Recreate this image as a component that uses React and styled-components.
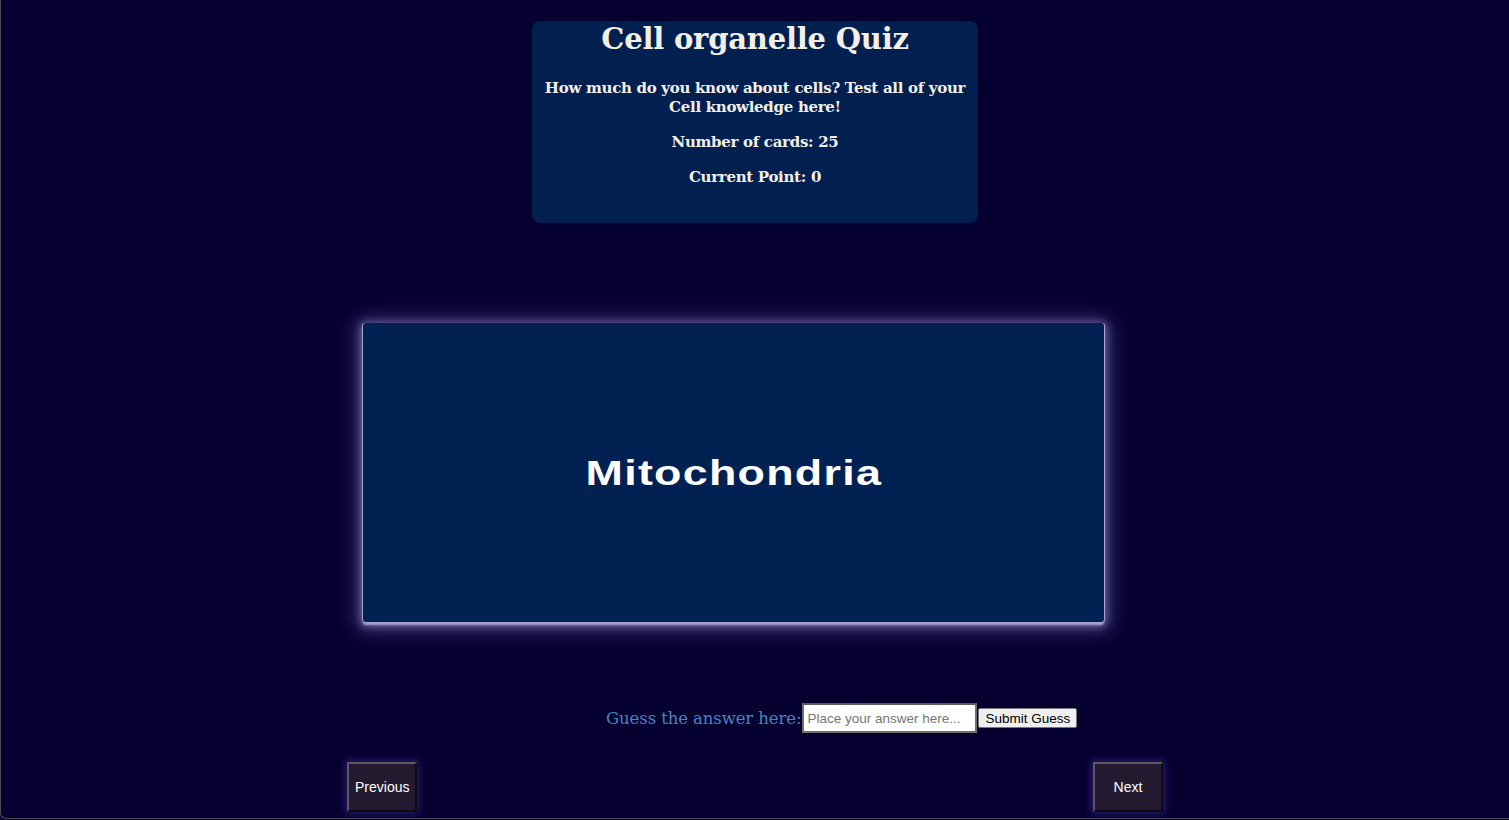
import React, { useState } from 'react'
import styled, { createGlobalStyle } from 'styled-components'

const GlobalStyle = createGlobalStyle`
  html, body {
    margin: 0;
    padding: 0;
    background: #060031;
  }
`;

const Page = styled.div`
  box-sizing: border-box;
  height: 819px;
  border-left: 1px solid #4b4a58;
  border-bottom: 1px solid #4b4a58;
  border-bottom-left-radius: 6px;
  background: #060031;
  display: flex;
  flex-direction: column;
  align-items: center;
  padding-top: 21px;
  overflow: hidden;
`;

const Header = styled.div`
  box-sizing: border-box;
  width: 446px;
  padding: 0 8px 36px;
  background: #012050;
  border-radius: 8px;
  color: #f4efe6;
  text-align: center;
  font-family: "DejaVu Serif", Georgia, serif;
`;

const Title = styled.h1`
  margin: 0;
  font-size: 29px;
  line-height: 36px;
  font-weight: bold;
  letter-spacing: -0.2px;
`;

const Info = styled.h4`
  margin: ${(p) => p.gap}px 0 0;
  font-size: 15px;
  line-height: 19px;
  font-weight: bold;
  letter-spacing: -0.3px;
`;

const Main = styled.div`
  width: 816px;
  display: flex;
  flex-direction: column;
`;

const Card = styled.div`
  margin: 100px 0 0 16px;
  width: 741px;
  height: 299px;
  background: #012153;
  border-radius: 3px;
  display: flex;
  align-items: center;
  justify-content: center;
  box-shadow:
    -1px 0 0 0 #aaa6cc,
    1px 0 0 0 #aaa6cc,
    0 3px 2px 0 #a6a2c9,
    0 2px 8px 3px rgba(150, 144, 200, 0.6),
    0 2px 20px 8px rgba(110, 100, 180, 0.4);
  cursor: pointer;
`;

const Term = styled.span`
  display: inline-block;
  color: #ffffff;
  font-family: "Liberation Sans", Arial, sans-serif;
  font-weight: bold;
  font-size: 35px;
  letter-spacing: 1px;
  transform: scaleX(1.28);
`;

const GuessRow = styled.div`
  margin-top: 81px;
  padding-left: 259px;
  display: flex;
  align-items: center;
  height: 30px;
`;

const GuessLabel = styled.span`
  color: #4287c2;
  font-family: "DejaVu Serif", Georgia, serif;
  font-size: 16.5px;
  letter-spacing: -0.1px;
  margin-right: 1px;
`;

const GuessInput = styled.input`
  box-sizing: border-box;
  width: 175px;
  height: 30px;
  border: 2px solid #6e6e6e;
  border-top-color: #5a5a5a;
  padding: 0 3px;
  font-family: "Liberation Sans", Arial, sans-serif;
  font-size: 13.5px;
  outline: none;
  &::placeholder {
    color: #767676;
  }
`;

const SubmitButton = styled.button`
  box-sizing: border-box;
  height: 20px;
  margin-left: 1px;
  padding: 0 6px;
  background: #efefef;
  border: 1px solid #767676;
  border-radius: 2px;
  font-family: "Liberation Sans", Arial, sans-serif;
  font-size: 13.5px;
  color: #000;
  cursor: pointer;
`;

const NavRow = styled.div`
  margin-top: 29px;
  display: flex;
  justify-content: space-between;
`;

const NavButton = styled.button`
  box-sizing: border-box;
  width: 70px;
  height: 50px;
  background: #241b30;
  color: #ffffff;
  font-family: "Liberation Sans", Arial, sans-serif;
  font-size: 14px;
  border: 2px solid;
  border-color: #5b5660 #0c0a12 #0c0a12 #5b5660;
  box-shadow: 0 0 7px 2px rgba(70, 50, 150, 0.55);
  cursor: pointer;
`;

const cards = [
  { q: 'Mitochondria', a: 'Powerhouse of the cell' },
  { q: 'Nucleus', a: 'Holds the genetic material' },
  { q: 'Ribosome', a: 'Makes proteins' },
];

function App() {
  const [index, setIndex] = useState(0);
  const [flipped, setFlipped] = useState(false);
  const [guess, setGuess] = useState('');

  const card = cards[index];

  return (
    <>
      <GlobalStyle />
      <Page>
        <Header>
          <Title>Cell organelle Quiz</Title>
          <Info gap={22}>How much do you know about cells? Test all of your Cell knowledge here!</Info>
          <Info gap={16}>Number of cards: 25</Info>
          <Info gap={16}>Current Point: 0</Info>
        </Header>
        <Main>
          <Card onClick={() => setFlipped(!flipped)}>
            <Term>{flipped ? card.a : card.q}</Term>
          </Card>
          <GuessRow>
            <GuessLabel>Guess the answer here:</GuessLabel>
            <GuessInput
              type="text"
              placeholder="Place your answer here..."
              value={guess}
              onChange={(e) => setGuess(e.target.value)}
            />
            <SubmitButton>Submit Guess</SubmitButton>
          </GuessRow>
          <NavRow>
            <NavButton onClick={() => { setIndex((index + cards.length - 1) % cards.length); setFlipped(false); }}>Previous</NavButton>
            <NavButton onClick={() => { setIndex((index + 1) % cards.length); setFlipped(false); }}>Next</NavButton>
          </NavRow>
        </Main>
      </Page>
    </>
  )
}

export default App
